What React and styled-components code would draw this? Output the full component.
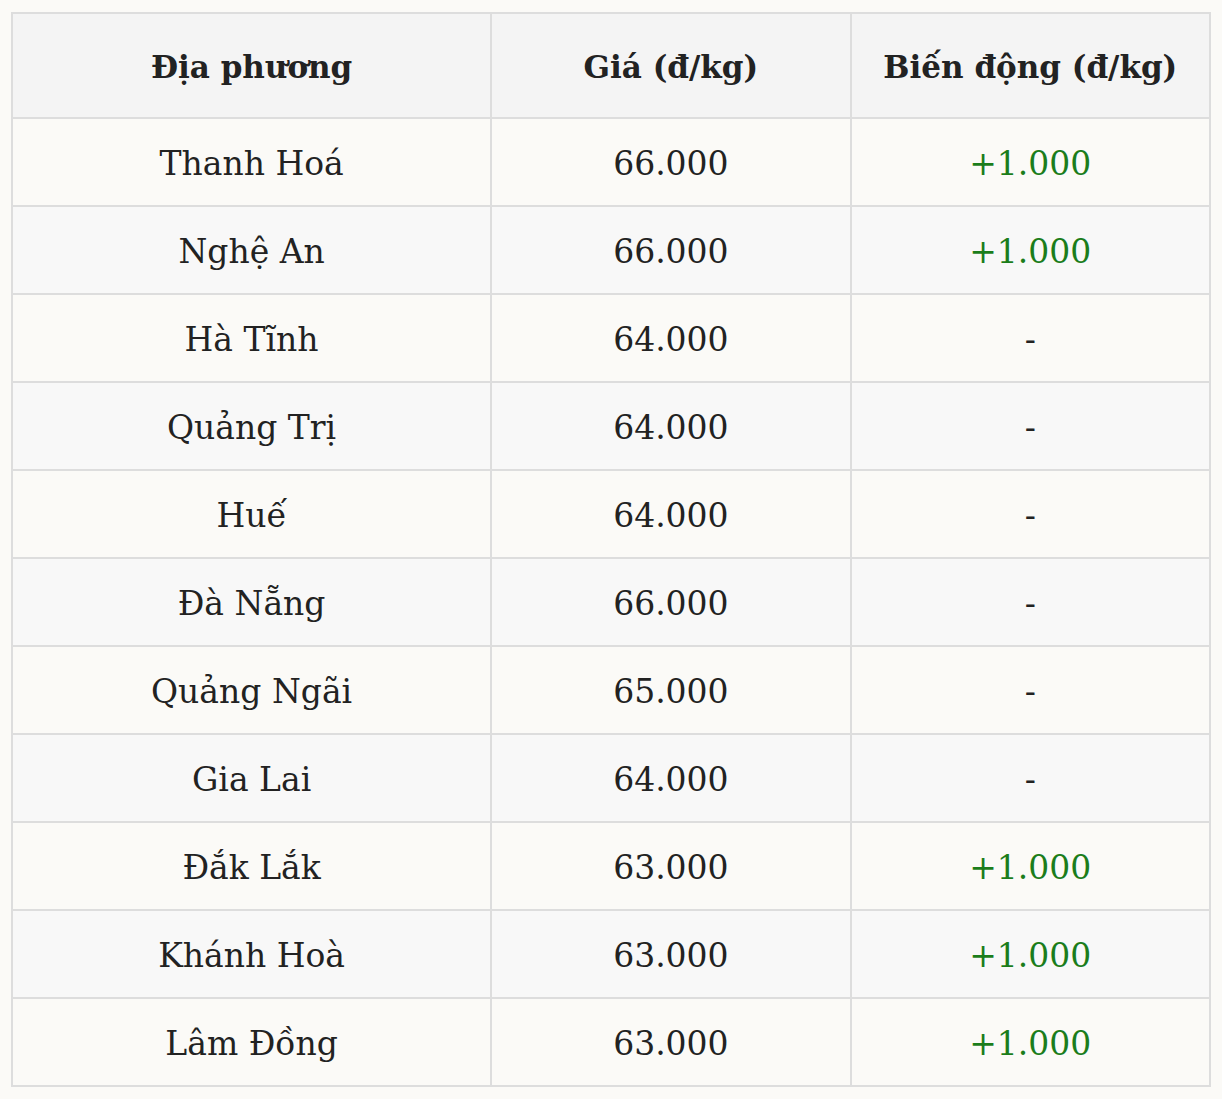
import React from "react";
import styled, { createGlobalStyle } from "styled-components";

const rows = [
    { place: "Thanh Hoá", price: "66.000", change: "+1.000" },
    { place: "Nghệ An", price: "66.000", change: "+1.000" },
    { place: "Hà Tĩnh", price: "64.000", change: "-" },
    { place: "Quảng Trị", price: "64.000", change: "-" },
    { place: "Huế", price: "64.000", change: "-" },
    { place: "Đà Nẵng", price: "66.000", change: "-" },
    { place: "Quảng Ngãi", price: "65.000", change: "-" },
    { place: "Gia Lai", price: "64.000", change: "-" },
    { place: "Đắk Lắk", price: "63.000", change: "+1.000" },
    { place: "Khánh Hoà", price: "63.000", change: "+1.000" },
    { place: "Lâm Đồng", price: "63.000", change: "+1.000" },
];

const App = () => {
    return (
        <>
            <GlobalStyle />
            <Page>
                <Table>
                    <colgroup>
                        <Col $width="40%" />
                        <Col $width="30%" />
                        <Col $width="30%" />
                    </colgroup>
                    <thead>
                        <tr>
                            <HeadCell>Địa phương</HeadCell>
                            <HeadCell>Giá (đ/kg)</HeadCell>
                            <HeadCell>Biến động (đ/kg)</HeadCell>
                        </tr>
                    </thead>
                    <tbody>
                        {rows.map((row, i) =>
                            <Row key={row.place} $even={i % 2 === 1}>
                                <Cell>{row.place}</Cell>
                                <Cell>{row.price}</Cell>
                                <Cell>
                                    <Change $up={row.change.startsWith("+")}>{row.change}</Change>
                                </Cell>
                            </Row>
                        )}
                    </tbody>
                </Table>
            </Page>
        </>
    );
};

const GlobalStyle = createGlobalStyle`
    html, body {
        margin : 0;
        background-color : #fbfaf7;
    }
    body {
        font-family : "DejaVu Serif", "Liberation Serif", serif;
        color : #222222;
    }
`;

const Page = styled.div`
    padding : 12px 11px;
`;

const Table = styled.table`
    width : 1200px;
    border-collapse : collapse;
    table-layout : fixed;
    border : 2px solid #dddddd;
`;

const Col = styled.col`
    width : ${props => props.$width};
`;

const HeadCell = styled.th`
    height : 100px;
    padding : 3px 0 0;
    background-color : #f4f4f4;
    border : 2px solid #dddddd;
    font-size : 31px;
    font-weight : 700;
    text-align : center;
    vertical-align : middle;
    white-space : nowrap;
`;

const Row = styled.tr`
    background-color : ${props => props.$even ? "#f8f8f8" : "#fbfaf7"};
`;

const Cell = styled.td`
    height : 83px;
    padding : 3px 0 0;
    border : 2px solid #dddddd;
    font-size : 33px;
    text-align : center;
    vertical-align : middle;
`;

const Change = styled.span`
    color : ${props => props.$up ? "#1b7d1b" : "#222222"};
`;

export default App;
